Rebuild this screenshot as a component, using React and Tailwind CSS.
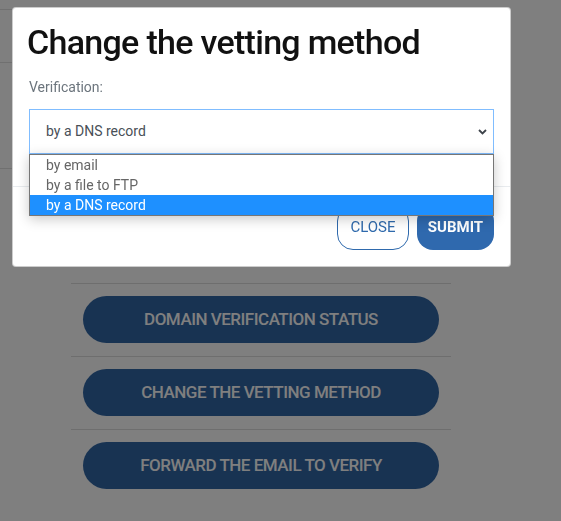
const ACTIONS = [
  "DOMAIN VERIFICATION STATUS",
  "CHANGE THE VETTING METHOD",
  "FORWARD THE EMAIL TO VERIFY",
];

const OPTIONS = ["by email", "by a file to FTP", "by a DNS record"];

function PageBehind() {
  return (
    <div className="min-h-screen bg-white">
      {/* table edge peeking out left of the modal */}
      <div className="w-[60px]">
        <div className="h-[10px] border-b border-[#e0e0e0]"></div>
        <div className="h-[53px] border-b border-[#e0e0e0]"></div>
        <div className="h-[106px] border-b border-[#e0e0e0]"></div>
      </div>

      <div className="ml-[71px] mt-[114px] w-[380px]">
        {ACTIONS.map((label) => (
          <div key={label} className="border-t border-[#dcdcdc] px-[12px] pt-[12px] pb-[13px]">
            <button className="flex h-[47px] w-full items-center justify-center rounded-full bg-[#3066a5] text-[17px] font-medium tracking-[-0.5px] text-white">
              {label}
            </button>
          </div>
        ))}
      </div>
    </div>
  );
}

function VettingModal() {
  return (
    <div className="fixed inset-0 bg-black/50 pl-[12px] pt-[7px]">
      <div className="w-[499px] rounded-[4px] border border-black/20 bg-white">
        <div className="px-4 pt-[14px]">
          <h2 className="-ml-[2px] text-[34px] font-medium leading-[40px] tracking-[-0.7px] text-[#111]">
            Change the vetting method
          </h2>
        </div>

        <div className="px-4 pt-[15px] pb-4">
          <label className="block text-[14px] leading-[20px] text-[#6c757d]">Verification:</label>
          <div className="relative mt-3 mb-4">
            <div className="flex h-[45px] items-center border border-[#80bdff] bg-white px-4 text-[14px] text-[#495057]">
              by a DNS record
              <svg className="absolute right-[7px] top-[20px]" width="9" height="6" viewBox="0 0 9 6" fill="none">
                <path d="M1 1l3.5 3.5L8 1" stroke="#3d434a" strokeWidth="1.8" />
              </svg>
            </div>
            <ul className="absolute left-0 right-0 top-full z-10 border border-[#767676] bg-white shadow-[0_3px_12px_rgba(0,0,0,0.22)]">
              {OPTIONS.map((opt, i) => (
                <li
                  key={opt}
                  className={`h-[20px] pl-4 text-[14px] leading-[20px] ${
                    i === 2 ? "bg-[#1e90ff] text-white" : "text-[#666]"
                  }`}
                >
                  {opt}
                </li>
              ))}
            </ul>
          </div>
        </div>

        <div className="flex justify-end gap-2 border-t border-[#e9ecef] px-4 pt-[18px] pb-4">
          <button className="h-[45px] w-[72px] rounded-[16px] border border-[#2f6aad] text-[15px] text-[#2f6aad]">
            CLOSE
          </button>
          <button className="h-[45px] w-[77px] rounded-[16px] bg-[#2f69ae] text-[15px] font-bold text-white">
            SUBMIT
          </button>
        </div>
      </div>
    </div>
  );
}

export default function App() {
  return (
    <div className="relative font-[Roboto,sans-serif]">
      <PageBehind />
      <VettingModal />
    </div>
  );
}
